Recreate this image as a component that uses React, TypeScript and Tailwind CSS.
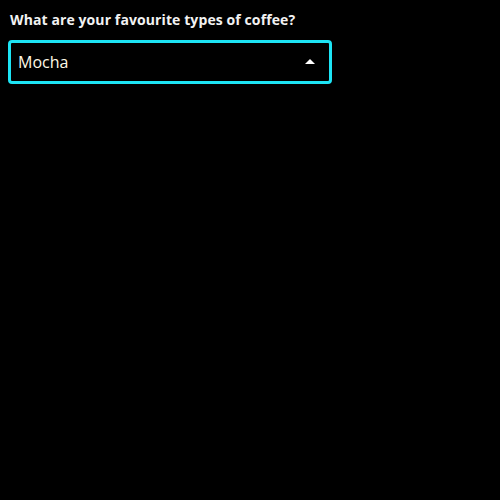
import React, { useState } from 'react';

const options = ['Espresso', 'Latte', 'Cappuccino', 'Mocha', 'Americano'];

export default function App() {
  const [value] = useState('Mocha');

  return (
    <div
      className="min-h-[500px] w-[500px] bg-black px-2 pt-[10px]"
      style={{ fontFamily: '"Open Sans", sans-serif' }}
    >
      <label className="block pl-[2px] text-[14px] font-bold leading-[20px] tracking-[0.1px] text-[#f2f2f2]">
        What are your favourite types of coffee?
      </label>
      <div className="mt-[10px] flex h-[44px] w-[324px] items-center justify-between rounded-[4px] border-[3px] border-[#1de4f5] pl-[7px] pr-[14px]">
        <span className="text-[16px] leading-none text-[#fff8e6]">{value}</span>
        <svg width="10" height="5" viewBox="0 0 10 5" className="mb-[1px]">
          <polygon points="0,5 5,0 10,5" fill="#ffffff" />
        </svg>
      </div>
      <select className="hidden" defaultValue={value}>
        {options.map((o) => (
          <option key={o}>{o}</option>
        ))}
      </select>
    </div>
  );
}
